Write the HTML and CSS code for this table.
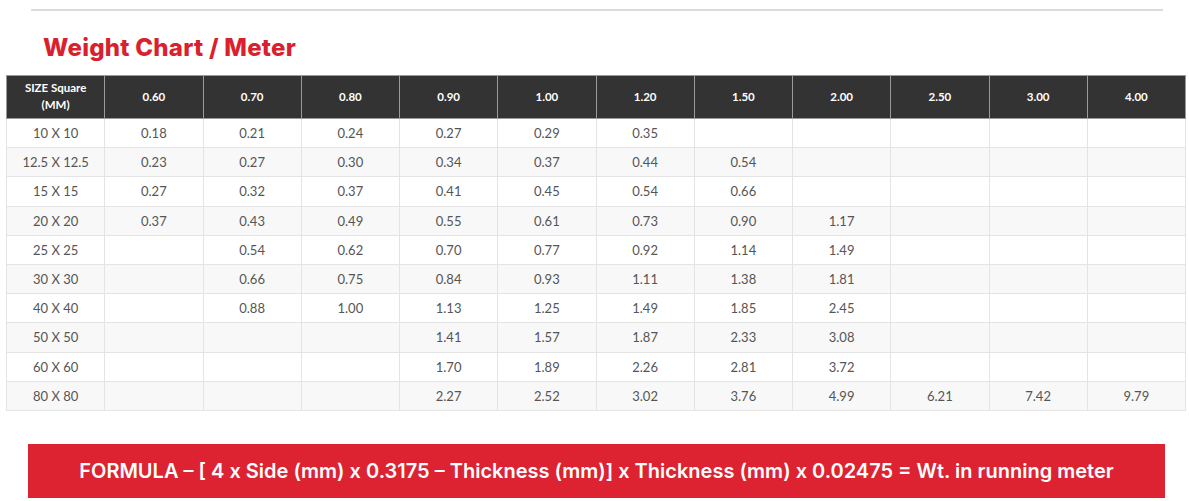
FILE: index.html
```html
<!DOCTYPE html>
<html>
<head>
<meta charset="utf-8">
<link rel="stylesheet" href="styles.css">
</head>
<body>
<div class="page">
  <div class="rule"></div>
  <h2 class="title">Weight Chart / Meter</h2>
  <table class="chart">
    <thead>
      <tr>
        <th>SIZE Square<br>(MM)</th>
        <th>0.60</th><th>0.70</th><th>0.80</th><th>0.90</th><th>1.00</th><th>1.20</th><th>1.50</th><th>2.00</th><th>2.50</th><th>3.00</th><th>4.00</th>
      </tr>
    </thead>
    <tbody>
      <tr><td>10 X 10</td><td>0.18</td><td>0.21</td><td>0.24</td><td>0.27</td><td>0.29</td><td>0.35</td><td></td><td></td><td></td><td></td><td></td></tr>
      <tr><td>12.5 X 12.5</td><td>0.23</td><td>0.27</td><td>0.30</td><td>0.34</td><td>0.37</td><td>0.44</td><td>0.54</td><td></td><td></td><td></td><td></td></tr>
      <tr><td>15 X 15</td><td>0.27</td><td>0.32</td><td>0.37</td><td>0.41</td><td>0.45</td><td>0.54</td><td>0.66</td><td></td><td></td><td></td><td></td></tr>
      <tr><td>20 X 20</td><td>0.37</td><td>0.43</td><td>0.49</td><td>0.55</td><td>0.61</td><td>0.73</td><td>0.90</td><td>1.17</td><td></td><td></td><td></td></tr>
      <tr><td>25 X 25</td><td></td><td>0.54</td><td>0.62</td><td>0.70</td><td>0.77</td><td>0.92</td><td>1.14</td><td>1.49</td><td></td><td></td><td></td></tr>
      <tr><td>30 X 30</td><td></td><td>0.66</td><td>0.75</td><td>0.84</td><td>0.93</td><td>1.11</td><td>1.38</td><td>1.81</td><td></td><td></td><td></td></tr>
      <tr><td>40 X 40</td><td></td><td>0.88</td><td>1.00</td><td>1.13</td><td>1.25</td><td>1.49</td><td>1.85</td><td>2.45</td><td></td><td></td><td></td></tr>
      <tr><td>50 X 50</td><td></td><td></td><td></td><td>1.41</td><td>1.57</td><td>1.87</td><td>2.33</td><td>3.08</td><td></td><td></td><td></td></tr>
      <tr><td>60 X 60</td><td></td><td></td><td></td><td>1.70</td><td>1.89</td><td>2.26</td><td>2.81</td><td>3.72</td><td></td><td></td><td></td></tr>
      <tr><td>80 X 80</td><td></td><td></td><td></td><td>2.27</td><td>2.52</td><td>3.02</td><td>3.76</td><td>4.99</td><td>6.21</td><td>7.42</td><td>9.79</td></tr>
    </tbody>
  </table>
  <div class="formula">FORMULA – [ 4 x Side (mm) x 0.3175 – Thickness (mm)] x Thickness (mm) x 0.02475 = Wt. in running meter</div>
</div>
</body>
</html>
```

FILE: styles.css
```css
html, body {
  margin: 0;
  padding: 0;
  background: #ffffff;
}

.page {
  width: 1189px;
  padding-top: 9px;
  font-family: "Lato", "Liberation Sans", sans-serif;
}

.rule {
  margin-left: 31px;
  width: 1132px;
  height: 2px;
  background: #dcdcdc;
}

.title {
  margin: 21px 0 0 43px;
  font-family: "Inter", "Liberation Sans", sans-serif;
  font-weight: 800;
  font-size: 24px;
  line-height: 32px;
  letter-spacing: 0.25px;
  color: #da1f2e;
}

.chart {
  margin: 11px 0 0 6px;
  width: 1180px;
  border-collapse: collapse;
  table-layout: fixed;
}

.chart th {
  background: #333333;
  color: #ffffff;
  font-weight: 700;
  font-size: 11.5px;
  line-height: 17px;
  height: 40px;
  padding: 0 0 2px;
  border: 1px solid #9a9a9a;
  text-align: center;
}

.chart td {
  height: 28.2px;
  padding: 0;
  border: 1px solid #e4e4e4;
  text-align: center;
  font-size: 13px;
  color: #555555;
}

.chart tbody tr:nth-child(even) td {
  background: #f8f8f8;
}

.formula {
  margin: 33px 0 0 28px;
  width: 1137px;
  height: 54px;
  background: #dd2232;
  color: #ffffff;
  font-family: "Inter", "Liberation Sans", sans-serif;
  font-weight: 600;
  font-size: 20px;
  display: flex;
  align-items: center;
  justify-content: center;
}
```
